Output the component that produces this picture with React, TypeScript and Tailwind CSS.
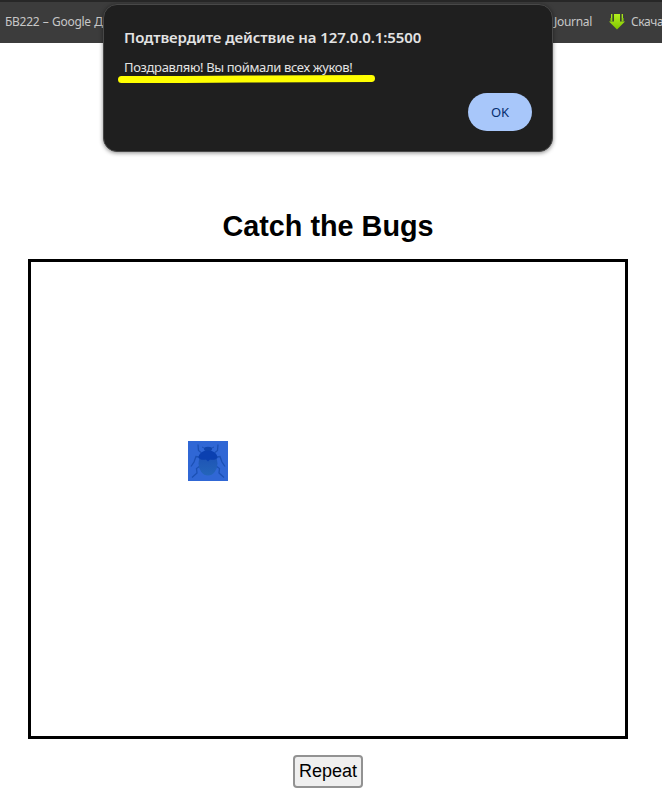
function DownloadIcon() {
  return (
    <svg className="size-4 shrink-0" viewBox="0 0 16 16">
      <defs>
        <linearGradient id="green" x1="0" y1="0" x2="0" y2="1">
          <stop offset="0" stopColor="#b4f01e" />
          <stop offset="1" stopColor="#7fc400" />
        </linearGradient>
      </defs>
      <path d="M5 0h6v7.500h5l-8 8-8-8h5z" fill="url(#green)" />
      <path d="M2 0h1.500v4H2zM12.500 0H14v4h-1.500z" fill="#a4e51a" />
      <path d="M1.500 4h2v3.500h-2zM12.500 4h2v3.500h-2z" fill="#8fd20e" />
      <path d="M4.200 0v7M11.800 0v7" stroke="#3c4a22" strokeWidth="1" />
    </svg>
  );
}

function Bug() {
  return (
    <svg className="block size-10" viewBox="0 0 40 40">
      <defs>
        <linearGradient id="shell" x1="0" y1="0" x2="0" y2="1">
          <stop offset="0" stopColor="#1c4fb4" />
          <stop offset="1" stopColor="#2465ba" />
        </linearGradient>
      </defs>
      <rect width="40" height="40" fill="#3067d5" />
      <g fill="none" stroke="#1b50b4" strokeWidth="1.300">
        <path d="M13 11.500 10.500 9.500 10 3.500M27 11.500 29.500 9.500 30 3.500" />
        <path d="M11 16 8 15.500 6 21 3 25.500M29 16 32 15.500 34 21 37 25.500" />
        <path d="M12 25 8.500 27.500 9 32 4 36.500M28 25 31.500 27.500 31 32 36 36.500" />
        <path d="M17 7.500 14 6M23 7.500 26 6" strokeWidth="1" />
      </g>
      <ellipse cx="20" cy="8" rx="4" ry="2.300" fill="#1146ae" />
      <ellipse cx="20" cy="22.500" rx="9.500" ry="12" fill="url(#shell)" />
      <path d="M10.500 17c0-4.500 4-7.500 9.500-7.500s9.500 3 9.500 7.500c-2 2-5.500 2-7.500 1.500L20 20.500l-2-2c-2 .500-5.500.500-7.500-1.500z" fill="#0b40b0" />
    </svg>
  );
}

export default function App() {
  return (
    <div className="relative h-[793px] w-[662px] overflow-hidden bg-white font-['Liberation_Sans',sans-serif] text-black">
      <header className="flex h-[43px] items-center justify-between overflow-hidden border-t-2 border-[#272727] bg-[#3c3c3c] pb-px pl-[5px] font-['Noto_Sans',sans-serif] text-[12px] whitespace-nowrap text-[#c7c7c7]">
        <span className="tracking-[-0.28px] [word-spacing:0.6px]">БВ222 – Google Диск</span>
        <div className="flex w-[108px] shrink-0 items-center">
          <span className="w-[55px] shrink-0 tracking-[-0.3px]">Journal</span>
          <DownloadIcon />
          <span className="ml-[6px] tracking-[-0.4px]">Скача</span>
        </div>
      </header>

      <main className="flex w-[656px] flex-col items-center pt-[167px]">
        <h1 className="text-[28.8px] leading-[33px] font-bold">Catch the Bugs</h1>
        <section className="mt-4 h-[480px] w-[600px] border-[3px] border-black pt-[179px] pl-[157px]">
          <Bug />
        </section>
        <button className="mt-4 h-[33px] w-[70px] rounded-[4px] border-2 border-[#929292] bg-[#efefef] pb-px text-[18px] leading-[28px]">Repeat</button>
      </main>

      <div role="dialog" className="absolute top-[4px] left-[103px] flex h-[148px] w-[450px] flex-col rounded-[14px] border border-[#484848] bg-[#1f1f1f] px-5 pt-5 font-['Noto_Sans',sans-serif] whitespace-nowrap text-[#e3e3e3] shadow-[0_1px_4px_rgba(0,0,0,0.45)]">
        <h2 className="text-[15px] leading-6 font-semibold">
          <span className="tracking-[-0.09px]">Подтвердите действие на 127.0.0.1:5500</span>
        </h2>
        <p className="mt-[9px] text-[13px] leading-[18px]">
          <span className="tracking-[-0.35px]">Поздравляю! Вы поймали всех жуков!</span>
        </p>
        <svg className="absolute top-[69px] left-[14px] h-[10px] w-[260px]" viewBox="0 0 260 10">
          <path d="M3.500 5.500 65 5.500 128 5 253.500 4.500" stroke="#ff0" strokeWidth="7" strokeLinecap="round" fill="none" />
        </svg>
        <button className="mt-[17px] h-[38px] w-16 self-end rounded-full bg-[#a8c7fa] text-[13px] text-[#062e6f]">
          <span className="relative top-px tracking-[-0.2px]">OK</span>
        </button>
      </div>
    </div>
  );
}
